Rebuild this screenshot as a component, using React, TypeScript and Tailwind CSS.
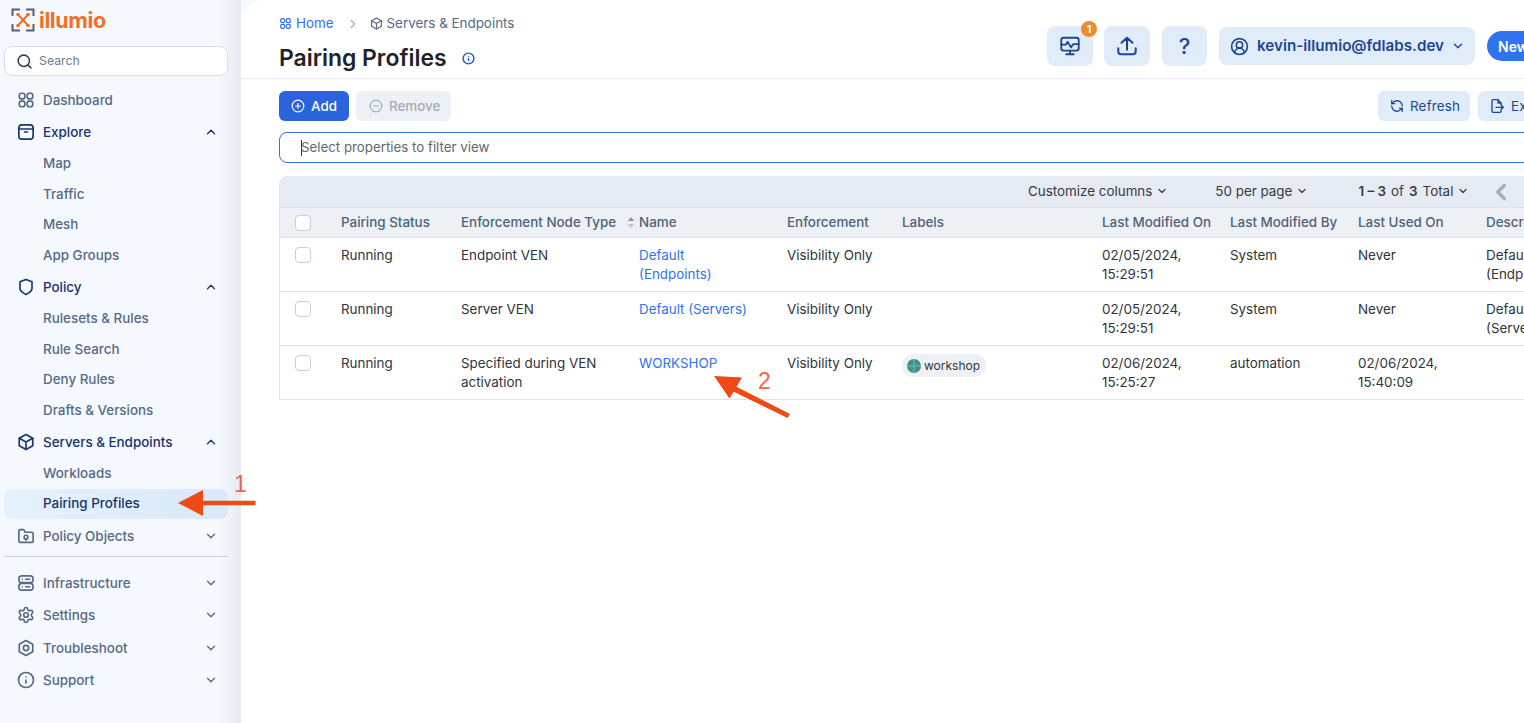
import { ChevronDown, ChevronLeft, ChevronRight, ChevronUp, CircleMinus, CirclePlus, CircleUserRound, Info, RefreshCcw, Search, Settings } from "lucide-react";
import type { ReactNode } from "react";

type IconProps = { className?: string };

function Svg({ className, children, sw = 2 }: IconProps & { children: ReactNode; sw?: number }) {
  return (
    <svg viewBox="0 0 24 24" fill="none" stroke="currentColor" strokeWidth={sw} strokeLinecap="round" strokeLinejoin="round" className={className}>
      {children}
    </svg>
  );
}

function DashIcon({ className }: IconProps) {
  return (
    <Svg className={className} sw={2.2}>
      <rect x="3" y="3" width="7.5" height="7.5" rx="3" />
      <rect x="13.5" y="3" width="7.5" height="7.5" rx="3" />
      <rect x="3" y="13.5" width="7.5" height="7.5" rx="3" />
      <rect x="13.5" y="13.5" width="7.5" height="7.5" rx="3" />
    </Svg>
  );
}

function ExploreIcon({ className }: IconProps) {
  return (
    <Svg className={className} sw={2.2}>
      <rect x="2.5" y="2.5" width="19" height="19" rx="4" />
      <path d="M2.5 8h19M10 12h4" />
    </Svg>
  );
}

function ShieldIcon({ className }: IconProps) {
  return (
    <Svg className={className} sw={2.2}>
      <path d="M12 2 20 5V14c0 3.5-4 6-8 8C8 20 4 17.5 4 14V5Z" />
    </Svg>
  );
}

function CubeIcon({ className }: IconProps) {
  return (
    <Svg className={className} sw={2.2}>
      <path d="M12 2 21 7v10l-9 5-9-5V7Z" />
      <path d="M3 7l9 5 9-5M12 12v10" />
    </Svg>
  );
}

function FolderIcon({ className }: IconProps) {
  return (
    <Svg className={className} sw={2.2}>
      <path d="M2.5 19V5A1.5 1.5 0 0 1 4 3.5H9L11 7h9A1.5 1.5 0 0 1 21.5 8.5V19A1.5 1.5 0 0 1 20 20.5H4A1.5 1.5 0 0 1 2.5 19Z" />
      <circle cx="12" cy="13.5" r="2.5" />
      <path d="M12 16v1.5" />
    </Svg>
  );
}

function ServerIcon({ className }: IconProps) {
  return (
    <Svg className={className} sw={2.2}>
      <rect x="2.5" y="2.5" width="19" height="9" rx="4" />
      <rect x="2.5" y="12.5" width="19" height="9" rx="4" />
      <path d="M7 7h.01M7 17h.01M11.5 7H17M11.5 17H17" />
    </Svg>
  );
}

function HexIcon({ className }: IconProps) {
  return (
    <Svg className={className} sw={2.2}>
      <path d="M12 2 21 7v10l-9 5-9-5V7Z" />
      <circle cx="12" cy="12" r="3.5" />
    </Svg>
  );
}

function MonitorIcon({ className }: IconProps) {
  return (
    <Svg className={className}>
      <rect x="2.5" y="3" width="19" height="14" rx="2.5" />
      <path d="M2.5 10.5h5l2-3 3.5 6 2.5-3.5h6M12 17v4M8 21h8" />
    </Svg>
  );
}

function UploadIcon({ className }: IconProps) {
  return (
    <Svg className={className} sw={2.2}>
      <path d="M12 16V3M6 8.5 12 3l6 5.5M2.5 14.5V18A3 3 0 0 0 5.5 21h13a3 3 0 0 0 3-3v-3.5" />
    </Svg>
  );
}

function ExportIcon({ className }: IconProps) {
  return (
    <Svg className={className}>
      <path d="M18 10V7.5L13.5 2.5H6A1.5 1.5 0 0 0 4.5 4v16A1.5 1.5 0 0 0 6 21.5h10.5A1.5 1.5 0 0 0 18 20v-2" />
      <path d="M13.5 2.5v5H18M10.5 14h11M18.5 11l3 3-3 3" />
    </Svg>
  );
}

function SortIcon() {
  return (
    <svg viewBox="0 0 8 14" className="h-[13px] w-[8px]">
      <path d="M4 1 7.5 5.5H.5Z" fill="#8b98a6" />
      <path d="M4 13 .5 8.5h7Z" fill="#c2cad3" />
    </svg>
  );
}

function LabelIcon() {
  return (
    <svg viewBox="0 0 14 14" className="h-[14px] w-[14px]">
      <circle cx="7" cy="7" r="7" fill="#3f9186" />
      <path d="M7 0v14M0 7h14" stroke="#7fb8ae" strokeWidth="1" />
    </svg>
  );
}

function Logo() {
  return (
    <div className="flex h-[46px] items-start pl-[7px] pt-[8px]">
      <svg viewBox="0 0 24 24" className="h-[24px] w-[24px]" fill="none">
        <path d="M1.5 8V1.5H9M15 1.5H22.5V8M22.5 16V22.5H15M9 22.5H1.5V16" stroke="#5a6068" strokeWidth="2" />
        <path d="M7 6.5 17 17.5M17 6.5 7 17.5" stroke="#f0702a" strokeWidth="2" />
        <circle cx="7" cy="6.5" r="1.8" fill="#f0702a" />
        <circle cx="17" cy="6.5" r="1.8" fill="#f0702a" />
        <circle cx="7" cy="17.5" r="1.8" fill="#f0702a" />
        <circle cx="17" cy="17.5" r="1.8" fill="#f0702a" />
      </svg>
      <span className="ml-[4px] text-[21.5px] leading-[24px] font-bold tracking-[-0.4px] text-[#f0702a]">illumio</span>
    </div>
  );
}

function NavGroup({ label, Icon, chevron, active, size = "h-[32px]" }: { label: string; Icon: (p: IconProps) => ReactNode; chevron?: "up" | "down"; active?: boolean; size?: string }) {
  return (
    <div className={`flex ${size} items-center pl-[13px] pr-[10px] ${active ? "text-[#17346f]" : "text-[#566a85]"}`}>
      <Icon className="h-[18px] w-[18px]" />
      <span className="ml-[8px] flex-1 text-[13.4px] font-medium">{label}</span>
      {chevron === "up" && <ChevronUp className="h-[14px] w-[14px]" strokeWidth={2.2} />}
      {chevron === "down" && <ChevronDown className="h-[14px] w-[14px]" strokeWidth={2.2} />}
    </div>
  );
}

function NavSub({ label, active }: { label: string; active?: boolean }) {
  return (
    <div
      className={`flex items-center pl-[39px] text-[13.4px] font-medium ${
        active ? "h-[30px] rounded-[8px] bg-gradient-to-r from-[#e3f2fb] to-[#d9e9fa] text-[#17346f]" : "h-[30.6px] text-[#566a85]"
      }`}
    >
      {label}
    </div>
  );
}

function Sidebar() {
  return (
    <aside className="h-full w-[241px] shrink-0 bg-gradient-to-r from-[#f5f8fc] from-[90%] to-[#e8ecf2] pr-[13px] pl-[4px]">
      <Logo />
      <div className="flex h-[30px] items-center rounded-[8px] border border-[#d8dee6] bg-white pl-[11px]">
        <Search className="h-[17px] w-[17px] text-[#2f3d52]" strokeWidth={2.2} />
        <span className="ml-[6px] text-[12.3px] text-[#6b7b90]">Search</span>
      </div>
      <div className="mt-[8px]">
        <NavGroup label="Dashboard" Icon={DashIcon} />
        <NavGroup label="Explore" Icon={ExploreIcon} chevron="up" active />
        <NavSub label="Map" />
        <NavSub label="Traffic" />
        <NavSub label="Mesh" />
        <NavSub label="App Groups" />
        <NavGroup label="Policy" Icon={ShieldIcon} chevron="up" active size="mt-[0.6px] h-[32px]" />
        <NavSub label="Rulesets & Rules" />
        <NavSub label="Rule Search" />
        <NavSub label="Deny Rules" />
        <NavSub label="Drafts & Versions" />
        <NavGroup label="Servers & Endpoints" Icon={CubeIcon} chevron="up" active size="mt-[0.6px] h-[32px]" />
        <NavSub label="Workloads" />
        <NavSub label="Pairing Profiles" active />
        <NavGroup label="Policy Objects" Icon={FolderIcon} chevron="down" size="mt-[1.4px] h-[32px]" />
        <div className="mt-[4.5px] mb-[9.5px] border-t border-[#c9d0da]" />
        <NavGroup label="Infrastructure" Icon={ServerIcon} chevron="down" size="h-[32.3px]" />
        <NavGroup label="Settings" Icon={({ className }) => <Settings className={className} strokeWidth={2.2} />} chevron="down" size="h-[32.3px]" />
        <NavGroup label="Troubleshoot" Icon={HexIcon} chevron="down" size="h-[32.3px]" />
        <NavGroup label="Support" Icon={({ className }) => <Info className={className} strokeWidth={2.2} />} chevron="down" size="h-[32.3px]" />
      </div>
    </aside>
  );
}

function Header() {
  return (
    <header className="flex h-[79px] justify-between border-b border-[#e9edf3] pr-[74px] pl-[38px]">
      <div>
        <div className="flex h-[46px] items-center pt-[1px] text-[13.4px]">
          <DashIcon className="h-[13px] w-[13px] text-[#2f74ee]" />
          <span className="ml-[4px] text-[#2f74ee]">Home</span>
          <ChevronRight className="ml-[12px] h-[14px] w-[14px] text-[#a9b4c2]" strokeWidth={2.4} />
          <CubeIcon className="ml-[10px] h-[13px] w-[13px] text-[#566a85]" />
          <span className="ml-[4px] text-[#566a85]">Servers &amp; Endpoints</span>
        </div>
        <div className="flex items-center">
          <h1 className="text-[22.9px] leading-[24px] font-semibold text-[#1f2429]">Pairing Profiles</h1>
          <Info className="ml-[15px] h-[13px] w-[13px] text-[#2559c7]" strokeWidth={2.6} />
        </div>
      </div>
      <div className="flex items-start pt-[26px]">
        <div className="relative flex h-[40px] w-[46px] items-center justify-center rounded-[8px] bg-[#e0edf9] text-[#1e4494]">
          <MonitorIcon className="h-[22px] w-[22px]" />
          <span className="absolute -top-[5px] -right-[4px] flex h-[16px] w-[16px] items-center justify-center rounded-full bg-[#f08c30] text-[11px] font-bold text-white">1</span>
        </div>
        <div className="ml-[11px] flex h-[40px] w-[46px] items-center justify-center rounded-[8px] bg-[#e0edf9] text-[#1e4494]">
          <UploadIcon className="h-[22px] w-[22px]" />
        </div>
        <div className="ml-[12px] flex h-[40px] w-[45px] items-center justify-center rounded-[8px] bg-[#e0edf9] text-[22px] font-medium text-[#1e4494]">?</div>
        <div className="mt-[1px] ml-[12px] flex h-[38px] w-[256px] items-center rounded-[8px] bg-[#e0edf9] pl-[11px] text-[#1e4494]">
          <CircleUserRound className="h-[19px] w-[19px]" strokeWidth={2} />
          <span className="ml-[8px] text-[15.2px] font-semibold">kevin-illumio@fdlabs.dev</span>
          <ChevronDown className="ml-[7px] h-[14px] w-[14px]" strokeWidth={2.4} />
        </div>
        <div className="mt-[5px] ml-[12px] flex h-[30px] w-[80px] items-center rounded-full bg-[#2f74ee] pl-[11px] text-[14px] font-semibold text-white">New</div>
      </div>
    </header>
  );
}

function Toolbar() {
  return (
    <div className="mt-[12px] flex h-[30px] pr-[74px] pl-[38px] text-[13.4px]">
      <button className="flex w-[70px] items-center rounded-[6px] bg-[#2a63dc] pl-[12px] font-medium text-white">
        <CirclePlus className="h-[14px] w-[14px]" strokeWidth={2} />
        <span className="ml-[6px]">Add</span>
      </button>
      <button className="ml-[7px] flex w-[95px] items-center rounded-[6px] bg-[#edf0f4] pl-[13px] font-medium text-[#a6acb3]">
        <CircleMinus className="h-[14px] w-[14px]" strokeWidth={2} />
        <span className="ml-[6px]">Remove</span>
      </button>
      <button className="ml-auto flex w-[92px] items-center rounded-[6px] bg-[#e0edf9] pl-[12px] text-[#1e4494]">
        <RefreshCcw className="h-[14px] w-[14px]" strokeWidth={2.2} />
        <span className="ml-[6px] tracking-[0.2px]">Refresh</span>
      </button>
      <button className="ml-[8px] flex w-[89px] items-center rounded-[6px] bg-[#e0edf9] pl-[11px] text-[#1e4494]">
        <ExportIcon className="h-[16px] w-[16px]" />
        <span className="ml-[6px] tracking-[0.2px]">Export</span>
      </button>
    </div>
  );
}

const COLS = "grid grid-cols-[61px_120px_178px_148px_115px_200px_128px_128px_128px_82px]";

const ROWS = [
  { type: "Endpoint VEN", name: "Default (Endpoints)", mod: "02/05/2024, 15:29:51", by: "System", used: "Never", desc: "Default (Endpoints)" },
  { type: "Server VEN", name: "Default (Servers)", mod: "02/05/2024, 15:29:51", by: "System", used: "Never", desc: "Default (Servers)" },
  { type: "Specified during VEN activation", name: "WORKSHOP", label: "workshop", mod: "02/06/2024, 15:25:27", by: "automation", used: "02/06/2024, 15:40:09", desc: "" },
];

function Table() {
  return (
    <div className="mt-[13px] mr-[74px] ml-[38px] overflow-hidden rounded-t-[8px] border-x border-[#dfe4eb] text-[13.4px]">
      <div className="flex h-[31px] items-center bg-[#e6ebf3] pl-[748px] text-[#333a40]">
        <span className="flex items-center">
          Customize columns
          <ChevronDown className="ml-[4px] h-[12px] w-[12px]" strokeWidth={2.4} />
        </span>
        <span className="ml-[47px] flex items-center">
          50 per page
          <ChevronDown className="ml-[4px] h-[12px] w-[12px]" strokeWidth={2.4} />
        </span>
        <span className="ml-[50px] flex items-center">
          <b className="font-semibold">1 – 3</b>
          <span className="mx-[5px]">of</span>
          <b className="font-semibold">3</b>
          <span className="ml-[5px]">Total</span>
          <ChevronDown className="ml-[4px] h-[12px] w-[12px]" strokeWidth={2.4} />
        </span>
        <ChevronLeft className="ml-[19px] h-[26px] w-[26px] text-[#a3acb7]" strokeWidth={3} />
      </div>
      <div className={`${COLS} h-[31px] items-center border-y border-[#dfe4eb] bg-[#edf1f6] font-medium text-[#4e6378]`}>
        <div className="pl-[15px]">
          <div className="h-[16px] w-[16px] rounded-[4px] border border-[#c3d0de] bg-white" />
        </div>
        <div>Pairing Status</div>
        <div className="flex items-center justify-between pr-[4px]">
          Enforcement Node Type
          <SortIcon />
        </div>
        <div>Name</div>
        <div>Enforcement</div>
        <div>Labels</div>
        <div>Last Modified On</div>
        <div>Last Modified By</div>
        <div>Last Used On</div>
        <div className="whitespace-nowrap">Description</div>
      </div>
      {ROWS.map((r) => (
        <div key={r.name} className={`${COLS} h-[54px] border-b border-[#dfe4eb] pt-[8px] leading-[19px] text-[#2f3438]`}>
          <div className="pl-[15px] pt-[1px]">
            <div className="h-[16px] w-[16px] rounded-[4px] border border-[#c3d0de] bg-white" />
          </div>
          <div>Running</div>
          <div className="pr-[20px]">{r.type}</div>
          <div className="w-[112px] text-[#2f74ee]">{r.name}</div>
          <div>Visibility Only</div>
          <div>
            {r.label && (
              <span className="inline-flex h-[23px] w-[84px] items-center rounded-full bg-[#edf1f6] pl-[5px] text-[12px]">
                <LabelIcon />
                <span className="ml-[3px]">{r.label}</span>
              </span>
            )}
          </div>
          <div className="pr-[14px]">{r.mod}</div>
          <div>{r.by}</div>
          <div className="pr-[14px]">{r.used}</div>
          <div>{r.desc}</div>
        </div>
      ))}
    </div>
  );
}

function Annotations() {
  return (
    <>
      <svg viewBox="0 0 1524 723" className="pointer-events-none absolute top-0 left-0 h-[723px] w-[1524px]">
        <path d="M200 500.8H255.5V505.2H200Z" fill="#ee4a17" />
        <path d="M178 503 203 490V516Z" fill="#ee4a17" />
        <path d="M727 382 790 414 787.5 418 724 387Z" fill="#ee4a17" />
        <path d="M714 376 742 377.5 729.5 398.5Z" fill="#ee4a17" />
      </svg>
      <span className="absolute top-[471px] left-[234px] font-['Liberation_Sans',sans-serif] text-[23px] leading-[26px] text-[#f0654a]">1</span>
      <span className="absolute top-[368px] left-[758px] font-['Liberation_Sans',sans-serif] text-[23px] leading-[26px] text-[#f0654a]">2</span>
    </>
  );
}

export default function App() {
  return (
    <div className="relative flex h-[723px] w-[1524px] overflow-hidden bg-[#f5f8fc] font-['Inter',sans-serif]">
      <Sidebar />
      <main className="relative h-full flex-1 overflow-hidden rounded-tl-[24px] bg-white">
        <div className="w-[1400px]">
          <Header />
          <Toolbar />
          <div className="mt-[11px] mr-[74px] ml-[38px] flex h-[31px] items-center rounded-[8px] border border-[#2f74ee] pl-[21px] text-[13.3px] text-[#63686e]">
            <span className="-mr-px h-[16px] w-px bg-[#333]" />
            Select properties to filter view
          </div>
          <Table />
        </div>
      </main>
      <Annotations />
    </div>
  );
}
